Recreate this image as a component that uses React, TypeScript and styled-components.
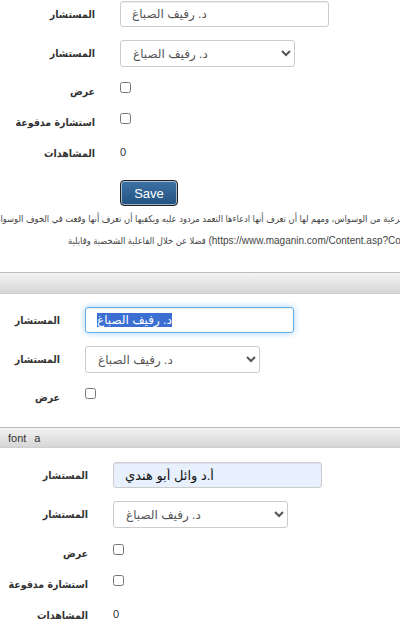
import { FC, useEffect, useRef } from 'react'
import styled, { createGlobalStyle } from 'styled-components'

const GlobalStyle = createGlobalStyle`
    html, body {
        margin: 0;
        padding: 0;
        background: #fff;
    }
    body {
        font-family: "Liberation Sans", "DejaVu Sans Condensed", "DejaVu Sans", sans-serif;
        color: #333;
        overflow: hidden;
    }
`

type FieldsProps = {
    labelWidth: number,
    top: number,
    bottom: number,
}

const consultant = 'د. رفيف الصباغ'

const Section = styled.section<{ $labelW: number, $top: number, $bottom: number }>`
    --label-w: ${p => p.$labelW}px;
    padding: ${p => p.$top}px 0 ${p => p.$bottom}px;
`

const Row = styled.div<{ $h: number, $align?: string }>`
    display: grid;
    grid-template-columns: var(--label-w) auto;
    column-gap: 25px;
    align-items: ${p => p.$align || 'center'};
    height: ${p => p.$h}px;
`

const Label = styled.label<{ $drop?: number }>`
    text-align: right;
    white-space: nowrap;
    font-family: "DejaVu Sans Condensed", "DejaVu Sans", sans-serif;
    font-weight: bold;
    font-size: 10.5px;
    line-height: 18px;
    color: #333;
    padding-top: ${p => p.$drop || 0}px;
`

const TextInput = styled.input<{ $focused?: boolean, $autofill?: boolean }>`
    box-sizing: border-box;
    width: 209px;
    height: 26px;
    margin: 0;
    padding: 0 11px;
    font-family: "Liberation Sans", "DejaVu Sans", sans-serif;
    font-size: ${p => p.$autofill ? 13 : 12}px;
    color: ${p => p.$autofill ? '#111' : '#555'};
    background: ${p => p.$autofill ? '#e8f0fe' : '#fff'};
    border: 1px solid ${p => p.$focused ? '#66afe9' : '#ccc'};
    border-radius: 3px;
    outline: none;
    box-shadow: ${p => p.$focused
        ? 'inset 0 1px 1px rgba(0,0,0,.075), 0 0 6px rgba(102,175,233,.6)'
        : 'inset 0 1px 1px rgba(0,0,0,.075)'};
    &::selection {
        background: #3b6fd1;
        color: #fff;
    }
`

const Select = styled.select`
    box-sizing: border-box;
    width: 175px;
    height: 27px;
    margin: 0;
    padding: 0 6px 0 8px;
    font-family: "Liberation Sans", "DejaVu Sans", sans-serif;
    font-size: 12px;
    color: #555;
    background: #fff;
    border: 1px solid #ccc;
    border-radius: 3px;
    outline: none;
`

const Check = styled.input`
    width: 11px;
    height: 11px;
    margin: 0;
    accent-color: #777;
`

const Value = styled.span`
    font-size: 11px;
    line-height: 18px;
    color: #333;
`

const SaveButton = styled.button`
    box-sizing: border-box;
    width: 58px;
    height: 26px;
    margin: 0;
    padding: 0;
    font-family: "Liberation Sans", sans-serif;
    font-size: 13px;
    color: #fff;
    background: linear-gradient(#3d72a6, #23527f);
    border: 1px solid #222;
    border-radius: 4px;
    box-shadow: inset 0 0 0 1px rgba(255,255,255,.55);
`

const Note = styled.div`
    margin: 2px 0 20px;
    overflow: hidden;
    font-family: "Liberation Sans", "DejaVu Sans Condensed", "DejaVu Sans", sans-serif;
    font-size: 10px;
    line-height: 21px;
    color: #444;
`

const NoteLine = styled.div<{ $end?: boolean }>`
    display: flex;
    justify-content: ${p => p.$end ? 'flex-end' : 'flex-start'};
    white-space: nowrap;
`

const NoteText = styled.span<{ $left?: number, $right?: number }>`
    flex: none;
    direction: rtl;
    margin-left: ${p => p.$left || 0}px;
    margin-right: ${p => p.$right || 0}px;
`

const Arabic = styled.span`
    font-size: 9.3px;
`

const Bar = styled.div<{ $h: number }>`
    box-sizing: border-box;
    height: ${p => p.$h}px;
    padding: 0 8px;
    display: flex;
    align-items: center;
    gap: 8px;
    font-size: 11px;
    color: #333;
    background: linear-gradient(#f3f3f3, #d6d6d6);
    border-top: 1px solid #bdbdbd;
    border-bottom: 1px solid #cfcfcf;
`

const ConsultantSelect: FC = () => (
    <Select defaultValue="1">
        <option value="1">{consultant}</option>
        <option value="2">أ.د وائل أبو هندي</option>
    </Select>
)

const FirstForm: FC<FieldsProps> = ({ labelWidth, top, bottom }) => (
    <Section $labelW={labelWidth} $top={top} $bottom={bottom}>
        <Row $h={39} $align="start">
            <Label $drop={4}>المستشار</Label>
            <TextInput defaultValue={consultant} />
        </Row>
        <Row $h={42} $align="start">
            <Label $drop={4}>المستشار</Label>
            <ConsultantSelect />
        </Row>
        <Row $h={31} $align="start">
            <Label>عرض</Label>
            <Check type="checkbox" />
        </Row>
        <Row $h={30} $align="start">
            <Label>استشارة مدفوعة</Label>
            <Check type="checkbox" />
        </Row>
        <Row $h={37} $align="start">
            <Label $drop={1}>المشاهدات</Label>
            <Value>0</Value>
        </Row>
        <Row $h={26}>
            <span />
            <SaveButton>Save</SaveButton>
        </Row>
        <Note>
            <NoteLine $end>
                <NoteText $right={-7}>
                    <Arabic>شرعية من الوسواس، ومهم لها أن تعرف أنها ادعاءها التعمد مردود عليه ويكفيها أن تعرف أنها وقعت في الخوف الوسواسي من التعمد</Arabic>
                </NoteText>
            </NoteLine>
            <NoteLine>
                <NoteText $left={68}>
                    <Arabic>تعالى </Arabic>(https://www.maganin.com/Content.asp?ContentID=20547)<Arabic> فضلا عن خلال الفاعلية الشخصية وقابلية</Arabic>
                </NoteText>
            </NoteLine>
        </Note>
    </Section>
)

const SecondForm: FC<FieldsProps> = ({ labelWidth, top, bottom }) => {
    const inputRef = useRef<HTMLInputElement>(null)

    useEffect(() => {
        const el = inputRef.current
        if (el) {
            el.focus()
            el.select()
        }
    }, [])

    return (
        <Section $labelW={labelWidth} $top={top} $bottom={bottom}>
            <Row $h={39} $align="start">
                <Label $drop={4}>المستشار</Label>
                <TextInput ref={inputRef} $focused defaultValue={consultant} />
            </Row>
            <Row $h={42} $align="start">
                <Label $drop={4}>المستشار</Label>
                <ConsultantSelect />
            </Row>
            <Row $h={31} $align="start">
                <Label>عرض</Label>
                <Check type="checkbox" />
            </Row>
        </Section>
    )
}

const ThirdForm: FC<FieldsProps> = ({ labelWidth, top, bottom }) => (
    <Section $labelW={labelWidth} $top={top} $bottom={bottom}>
        <Row $h={39} $align="start">
            <Label $drop={4}>المستشار</Label>
            <TextInput $autofill defaultValue="أ.د وائل أبو هندي" />
        </Row>
        <Row $h={43} $align="start">
            <Label $drop={4}>المستشار</Label>
            <ConsultantSelect />
        </Row>
        <Row $h={31} $align="start">
            <Label>عرض</Label>
            <Check type="checkbox" />
        </Row>
        <Row $h={30} $align="start">
            <Label>استشارة مدفوعة</Label>
            <Check type="checkbox" />
        </Row>
        <Row $h={20} $align="start">
            <Label $drop={1}>المشاهدات</Label>
            <Value>0</Value>
        </Row>
    </Section>
)

const App: FC = () => (
    <>
        <GlobalStyle />
        <FirstForm labelWidth={95} top={1} bottom={0} />
        <Bar $h={22} />
        <SecondForm labelWidth={60} top={13} bottom={8} />
        <Bar $h={21}>
            <span>font</span>
            <span>a</span>
        </Bar>
        <ThirdForm labelWidth={88} top={14} bottom={0} />
    </>
)

export default App
